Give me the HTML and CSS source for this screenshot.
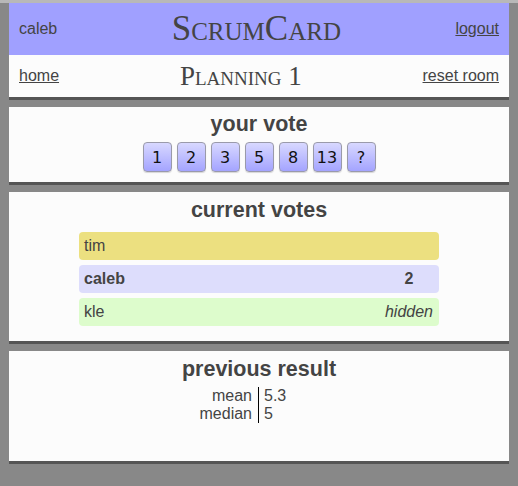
FILE: index.html
```html
<!DOCTYPE html>
<html>
<head>
<meta charset="utf-8">
<title>ScrumCard</title>
<link rel="stylesheet" href="styles.css">
</head>
<body>
<div class="topstrip"></div>
<main class="page">
  <section class="panel panel-head">
    <div class="header">
      <span class="user">caleb</span>
      <span class="brand">ScrumCard</span>
      <a class="link" href="#">logout</a>
    </div>
    <div class="nav">
      <a class="link" href="#">home</a>
      <span class="room">Planning 1</span>
      <a class="link" href="#">reset room</a>
    </div>
  </section>

  <section class="panel panel-vote">
    <h2 class="title">your vote</h2>
    <div class="cards">
      <button class="card">1</button>
      <button class="card">2</button>
      <button class="card">3</button>
      <button class="card">5</button>
      <button class="card">8</button>
      <button class="card">13</button>
      <button class="card">?</button>
    </div>
  </section>

  <section class="panel panel-current">
    <h2 class="title">current votes</h2>
    <ul class="votes">
      <li class="vote vote-waiting"><span class="name">tim</span><span class="value"></span></li>
      <li class="vote vote-self"><span class="name">caleb</span><span class="value">2</span></li>
      <li class="vote vote-done"><span class="name">kle</span><span class="value hidden">hidden</span></li>
    </ul>
  </section>

  <section class="panel panel-prev">
    <h2 class="title">previous result</h2>
    <div class="stats">
      <span class="label">mean</span><span class="num">5.3</span>
      <span class="label">median</span><span class="num">5</span>
    </div>
  </section>
</main>
</body>
</html>
```

FILE: styles.css
```css
html, body {
  margin: 0;
  padding: 0;
}
body {
  background: #888888;
  font-family: "Liberation Sans", Arial, sans-serif;
  color: #444444;
  font-size: 16px;
}
.topstrip {
  height: 3px;
  background: #b8b8b8;
}
.page {
  display: flex;
  flex-direction: column;
  gap: 7px;
  width: 500px;
  margin-left: 9px;
}
.panel {
  background: #fcfcfc;
  border-bottom: 3px solid #555555;
}
.header, .nav {
  display: flex;
  align-items: center;
  justify-content: space-between;
  padding: 0 10px;
}
.header {
  height: 52px;
  background: #a0a0ff;
}
.nav {
  height: 42px;
}
.user, .link {
  line-height: 18px;
  color: #444444;
}
.brand, .room {
  font-family: "Liberation Serif", "Times New Roman", serif;
  font-variant: small-caps;
  color: #444444;
}
.brand {
  font-size: 35px;
  line-height: 40px;
}
.room {
  font-size: 27px;
  line-height: 30px;
}
.title {
  margin: 0;
  text-align: center;
  font-size: 21.5px;
  line-height: 24px;
  font-weight: bold;
  color: #444444;
}
.panel-vote {
  padding: 5px 0 10px;
}
.cards {
  display: flex;
  justify-content: center;
  gap: 5px;
  margin-top: 6px;
}
.card {
  width: 29px;
  height: 30px;
  padding: 0;
  border: 1px solid #9a9aaa;
  border-radius: 4px;
  background: linear-gradient(#d8d8ff, #a4a4ff);
  box-shadow: 0 1px 1px rgba(0, 0, 0, 0.15);
  font-family: "DejaVu Sans", sans-serif;
  font-size: 16px;
  color: #111111;
}
.panel-current {
  padding: 6px 0 15px;
}
.votes {
  list-style: none;
  margin: 10px auto 0;
  padding: 0;
  width: 360px;
  display: flex;
  flex-direction: column;
  gap: 5px;
}
.vote {
  display: flex;
  justify-content: space-between;
  height: 28px;
  line-height: 28px;
  padding: 0 5px;
  border-radius: 4px;
}
.vote .value {
  width: 50px;
  text-align: center;
}
.vote-waiting { background: #ece080; }
.vote-self { background: #ddddfc; font-weight: bold; }
.vote-done { background: #ddfccc; }
.hidden { font-style: italic; }
.panel-prev {
  padding: 6px 0 0;
  height: 104px;
}
.stats {
  display: grid;
  grid-template-columns: 1fr 1fr;
  margin-top: 6px;
  line-height: 18px;
}
.stats .label {
  text-align: right;
  padding-right: 6px;
  border-right: 1px solid #000000;
}
.stats .num {
  padding-left: 5px;
}
```
